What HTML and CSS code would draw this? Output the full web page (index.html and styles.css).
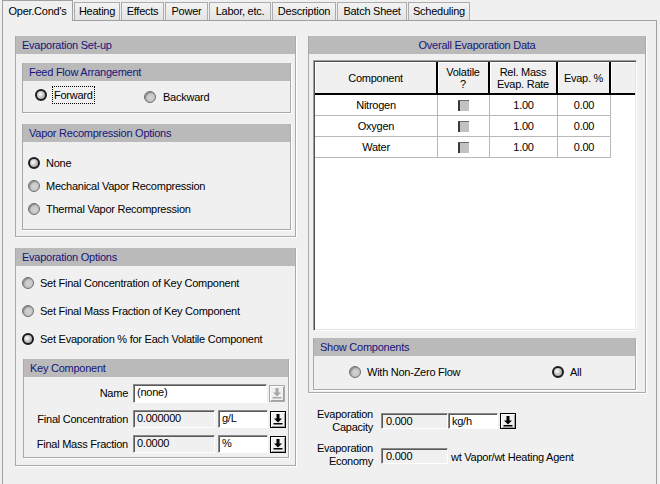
FILE: index.html
```html
<!DOCTYPE html>
<html>
<head>
<meta charset="utf-8">
<title>Oper.Cond's</title>
<link rel="stylesheet" href="styles.css">
</head>
<body>
<div class="tabs">
  <div class="tab active">Oper.Cond's</div>
  <div class="tab t-heating">Heating</div>
  <div class="tab t-effects">Effects</div>
  <div class="tab t-power">Power</div>
  <div class="tab t-labor">Labor, etc.</div>
  <div class="tab t-desc">Description</div>
  <div class="tab t-batch">Batch Sheet</div>
  <div class="tab t-sched">Scheduling</div>
</div>
<div class="panel">
  <div class="col-left">
    <div class="group g-setup">
      <div class="hdr">Evaporation Set-up</div>
      <div class="group g-feed">
        <div class="hdr">Feed Flow Arrangement</div>
        <div class="feed-body">
          <div class="opt opt-forward"><span class="radio on"></span><span class="focus">Forward</span></div>
          <div class="opt opt-backward"><span class="radio"></span><span>Backward</span></div>
        </div>
      </div>
      <div class="group g-vapor">
        <div class="hdr">Vapor Recompression Options</div>
        <div class="vapor-body">
          <div class="opt vrow"><span class="radio on"></span><span>None</span></div>
          <div class="opt vrow"><span class="radio"></span><span>Mechanical Vapor Recompression</span></div>
          <div class="opt vrow"><span class="radio"></span><span>Thermal Vapor Recompression</span></div>
        </div>
      </div>
    </div>
    <div class="group g-options">
      <div class="hdr">Evaporation Options</div>
      <div class="options-body">
        <div class="opt orow"><span class="radio"></span><span>Set Final Concentration of Key Component</span></div>
        <div class="opt orow"><span class="radio"></span><span>Set Final Mass Fraction of Key Component</span></div>
        <div class="opt orow"><span class="radio on"></span><span>Set Evaporation % for Each Volatile Component</span></div>
      </div>
      <div class="group g-key">
        <div class="hdr">Key Component</div>
        <div class="key-body">
          <div class="krow">
            <span class="klabel">Name</span>
            <span class="field white f-name">(none)</span>
            <span class="ddbtn disabled"><svg viewBox="0 0 12 12" width="12" height="12"><path d="M4.5 1h3v4.5h2.5L6 9.5 2 5.5h2.5z"/><rect x="1.5" y="10" width="9" height="1.5"/></svg></span>
          </div>
          <div class="krow">
            <span class="klabel">Final Concentration</span>
            <span class="field ro f-val">0.000000</span>
            <span class="field white f-unit">g/L</span>
            <span class="ddbtn"><svg viewBox="0 0 12 12" width="12" height="12"><path d="M4.5 1h3v4.5h2.5L6 9.5 2 5.5h2.5z"/><rect x="1.5" y="10" width="9" height="1.5"/></svg></span>
          </div>
          <div class="krow">
            <span class="klabel">Final Mass Fraction</span>
            <span class="field ro f-val">0.0000</span>
            <span class="field white f-unit">%</span>
            <span class="ddbtn"><svg viewBox="0 0 12 12" width="12" height="12"><path d="M4.5 1h3v4.5h2.5L6 9.5 2 5.5h2.5z"/><rect x="1.5" y="10" width="9" height="1.5"/></svg></span>
          </div>
        </div>
      </div>
    </div>
  </div>
  <div class="col-right">
    <div class="group g-overall">
      <div class="hdr center">Overall Evaporation Data</div>
      <div class="grid">
        <div class="ghead">
          <div class="gh">Component</div>
          <div class="gh">Volatile<br>?</div>
          <div class="gh">Rel. Mass<br>Evap. Rate</div>
          <div class="gh">Evap. %</div>
          <div class="gh gh-last"></div>
        </div>
        <div class="grow">
          <div class="gc">Nitrogen</div>
          <div class="gc"><span class="chk"></span></div>
          <div class="gc">1.00</div>
          <div class="gc">0.00</div>
        </div>
        <div class="grow">
          <div class="gc">Oxygen</div>
          <div class="gc"><span class="chk"></span></div>
          <div class="gc">1.00</div>
          <div class="gc">0.00</div>
        </div>
        <div class="grow">
          <div class="gc">Water</div>
          <div class="gc"><span class="chk"></span></div>
          <div class="gc">1.00</div>
          <div class="gc">0.00</div>
        </div>
      </div>
      <div class="group g-show">
        <div class="hdr">Show Components</div>
        <div class="show-body">
          <div class="opt opt-nonzero"><span class="radio"></span><span>With Non-Zero Flow</span></div>
          <div class="opt opt-all"><span class="radio on"></span><span>All</span></div>
        </div>
      </div>
    </div>
    <div class="evap-fields">
      <div class="erow">
        <span class="elabel">Evaporation<br>Capacity</span>
        <span class="field ro f-evap">0.000</span>
        <span class="field white f-eunit">kg/h</span>
        <span class="ddbtn"><svg viewBox="0 0 12 12" width="12" height="12"><path d="M4.5 1h3v4.5h2.5L6 9.5 2 5.5h2.5z"/><rect x="1.5" y="10" width="9" height="1.5"/></svg></span>
      </div>
      <div class="erow erow2">
        <span class="elabel">Evaporation<br>Economy</span>
        <span class="field ro f-evap">0.000</span>
        <span class="etext">wt Vapor/wt Heating Agent</span>
      </div>
    </div>
  </div>
</div>
</body>
</html>
```

FILE: styles.css
```css
* { box-sizing: border-box; }

body {
  margin: 0;
  width: 660px;
  height: 484px;
  overflow: hidden;
  background: #f0f0f0;
  font-family: "Liberation Sans", Arial, sans-serif;
  font-size: 11px;
  letter-spacing: -0.25px;
  color: #000;
}

/* ---------- tabs ---------- */
.tabs {
  display: flex;
  align-items: flex-end;
  height: 20px;
  padding-left: 2px;
  position: relative;
  z-index: 1;
}
.tab {
  height: 18px;
  line-height: 16px;
  text-align: center;
  white-space: nowrap;
  border: 1px solid #acacac;
  border-bottom: none;
  background: linear-gradient(#f3f3f3, #e4e4e4);
  margin-left: 1px;
}
.tab.active {
  width: 71px;
  height: 21px;
  margin-left: 0;
  margin-bottom: -1px;
  padding-top: 2px;
  background: #f0f0f0;
  border-color: #a0a0a0;
}
.t-heating { width: 46px; }
.t-effects { width: 43px; }
.t-power { width: 43px; }
.t-labor { width: 62px; }
.t-desc { width: 64px; }
.t-batch { width: 70px; }
.t-sched { width: 62px; }

/* ---------- panel ---------- */
.panel {
  display: flex;
  gap: 12px;
  margin-left: 2px;
  width: 655px;
  height: 470px;
  padding: 15px 10px 0 12px;
  border: 1px solid #a0a0a0;
  background: #f0f0f0;
}
.col-left { width: 281px; flex: none; }
.col-right { width: 338px; flex: none; }

/* ---------- group boxes ---------- */
.group {
  border: 1px solid #a9a9a9;
  border-top: none;
  box-shadow: 1px 1px 0 #ffffff;
}
.hdr {
  height: 18px;
  line-height: 18px;
  padding-left: 6px;
  background: #bababa;
  color: #15157a;
  white-space: nowrap;
}
.hdr.center { text-align: center; padding-left: 0; }

.g-setup { height: 201px; }
.g-feed { height: 50px; margin: 9px 4px 0 6px; }
.g-vapor { height: 106px; margin: 11px 4px 0 6px; }
.g-options { height: 218px; margin-top: 11px; }
.g-key { height: 99px; margin: 6px 6px 0 7px; }

.g-overall { height: 357px; }
.g-show { height: 52px; margin: 7px 0 0 4px; width: 323px; }

/* ---------- radio options ---------- */
.opt {
  display: flex;
  align-items: center;
  gap: 6px;
  white-space: nowrap;
}
.radio {
  flex: none;
  width: 12px;
  height: 12px;
  border-radius: 50%;
  border: 1px solid #6e6e6e;
  background: radial-gradient(circle at 55% 55%, #d4d4d4 0, #c4c4c4 55%, #a0a0a0 100%);
  box-shadow: inset 1px 1px 1px #8a8a8a;
}
.radio.on {
  border: 2px solid #1c1c1c;
  background: radial-gradient(circle at 40% 40%, #ffffff 0, #c8c8c8 45%, #8a8a8a 100%);
  box-shadow: none;
}
.focus {
  border: 1px dotted #000;
  padding: 1px 1px;
  line-height: 14px;
}

.feed-body {
  display: flex;
  align-items: flex-start;
  padding-left: 12px;
}
.opt-forward { width: 109px; margin-top: 5px; gap: 5px; }
.opt-backward { margin-top: 10px; gap: 7px; }

.vapor-body { padding: 9px 0 0 5px; }
.vrow { height: 23px; }

.options-body { padding: 3px 0 0 6px; }
.orow { height: 28px; }

/* ---------- key component fields ---------- */
.key-body { padding-top: 7px; }
.krow {
  display: flex;
  align-items: center;
  height: 18px;
  margin-bottom: 8px;
}
.krow + .krow + .krow { margin-top: -1px; }
.klabel {
  width: 104px;
  margin-right: 5px;
  text-align: right;
  white-space: nowrap;
}
.field {
  display: block;
  height: 18px;
  line-height: 15px;
  padding-left: 3px;
  border: 1px solid;
  border-color: #8a8a8a #ffffff #ffffff #8a8a8a;
  box-shadow: inset 1px 1px 0 #5a5a5a;
  white-space: nowrap;
  overflow: hidden;
}
.field.white { background: #ffffff; }
.field.ro { background: #f0f0f0; }
.f-name { width: 134px; height: 19px; margin-right: 2px; }
.f-val { width: 82px; margin-right: 3px; }
.f-unit { width: 50px; margin-right: 2px; }

.ddbtn {
  flex: none;
  display: flex;
  align-items: center;
  justify-content: center;
  width: 16px;
  height: 17px;
  border: 1px solid #000;
  background: #f0f0f0;
  box-shadow: inset 1px 1px 0 #ffffff, inset -1px -1px 0 #a0a0a0;
}
.ddbtn svg { fill: #000; }
.ddbtn.disabled { border-color: #a8a8a8; }
.ddbtn.disabled svg { fill: #a8a8a8; }

/* ---------- grid ---------- */
.grid {
  width: 324px;
  height: 271px;
  margin: 6px 0 0 4px;
  border: 1px solid;
  border-color: #a0a0a0 #ffffff #ffffff #a0a0a0;
  box-shadow: inset 1px 1px 0 #505050, inset -1px -1px 0 #e3e3e3;
  background: #ffffff;
  padding: 1px 1px 0 1px;
}
.ghead {
  display: grid;
  grid-template-columns: 123px 52px 68px 53px 1fr;
  height: 33px;
}
.gh {
  display: flex;
  align-items: center;
  justify-content: center;
  text-align: center;
  line-height: 12px;
  background: #f0f0f0;
  border-right: 2px solid #000;
  border-bottom: 2px solid #000;
  box-shadow: inset 1px 1px 0 #ffffff;
}
.gh-last { border-right: none; }
.grow {
  display: grid;
  grid-template-columns: 123px 52px 68px 53px;
  width: 296px;
  height: 21px;
}
.gc {
  display: flex;
  align-items: center;
  justify-content: center;
  border-right: 1px solid #b8b8b8;
  border-bottom: 1px solid #b8b8b8;
}
.chk {
  width: 11px;
  height: 11px;
  background: #c2c2c2;
  border-left: 2px solid #3a3a3a;
  border-top: 1px solid #6a6a6a;
}

/* ---------- show components ---------- */
.show-body {
  display: flex;
  align-items: flex-start;
  padding: 10px 0 0 35px;
}
.opt-nonzero { width: 203px; gap: 6px; }
.opt-all { gap: 6px; }

/* ---------- bottom fields ---------- */
.evap-fields { padding-top: 15px; }
.erow {
  display: flex;
  align-items: flex-start;
}
.erow2 { margin-top: 8px; }
.elabel {
  width: 65px;
  margin-right: 8px;
  text-align: right;
  line-height: 13px;
  white-space: nowrap;
}
.erow .field { margin-top: 5px; height: 16px; line-height: 14px; }
.erow2 .field { margin-top: 6px; }
.f-evap { width: 67px; padding-left: 4px; }
.f-eunit { width: 50px; margin-right: 2px; }
.erow .ddbtn { margin-top: 5px; height: 16px; }
.etext { margin-top: 9px; margin-left: 3px; white-space: nowrap; }
```
